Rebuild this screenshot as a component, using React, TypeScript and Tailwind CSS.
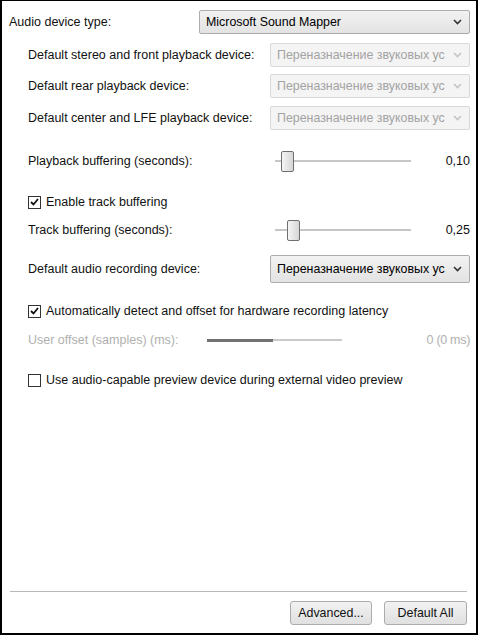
import React from 'react';

const Chevron = ({ disabled }: { disabled?: boolean }) => (
  <svg width="9" height="6" viewBox="0 0 9 6" className="shrink-0">
    <polyline
      points="1,1 4.5,4.5 8,1"
      fill="none"
      stroke={disabled ? '#c4c4c4' : '#333333'}
      strokeWidth="1.6"
    />
  </svg>
);

interface SelectProps {
  value: string;
  disabled?: boolean;
  className?: string;
}

const SelectBox = ({ value, disabled, className = '' }: SelectProps) => (
  <div
    className={`flex items-center justify-between pl-[6px] pr-[7px] rounded-[2px] border text-[12.4px] ${
      disabled
        ? 'border-[#d9d9d9] bg-[#f4f4f4] text-[#a3a3a3]'
        : 'border-[#acacac] bg-gradient-to-b from-[#f2f2f2] to-[#e3e3e3] text-black'
    } ${className}`}
  >
    <span className="whitespace-nowrap overflow-hidden">{value}</span>
    <Chevron disabled={disabled} />
  </div>
);

const Checkbox = ({ checked, label }: { checked?: boolean; label: string }) => (
  <div className="flex items-center gap-[5px]">
    <div className="w-[13px] h-[13px] border border-[#333] bg-white flex items-center justify-center">
      {checked && (
        <svg width="9" height="8" viewBox="0 0 9 8">
          <polyline points="1,4 3.5,6.5 8,1" fill="none" stroke="#111" strokeWidth="1.8" />
        </svg>
      )}
    </div>
    <span>{label}</span>
  </div>
);

const Slider = ({ thumbLeft }: { thumbLeft: number }) => (
  <div className="relative w-[136px] h-[22px]">
    <div className="absolute left-0 right-0 top-[10px] h-[2px] bg-[#c6c6c6]" />
    <div
      className="absolute top-[1px] w-[13px] h-[21px] rounded-[2px] border border-[#707070] bg-gradient-to-r from-[#f5f5f5] to-[#d6d6d6]"
      style={{ left: thumbLeft }}
    />
  </div>
);

const App = () => {
  const ru = 'Переназначение звуковых ус';

  return (
    <div
      className="w-[479px] h-[636px] bg-white text-[12.5px] text-[#111]"
      style={{ fontFamily: '"Liberation Sans", Arial, sans-serif' }}
    >
      <div className="w-[478px] h-[635px] border-l-2 border-t border-r-2 border-b-2 border-black flex flex-col">
        <div className="flex items-center justify-between mt-[9px] pl-[7px] pr-[6px] h-[24px]">
          <span>Audio device type:</span>
          <SelectBox value="Microsoft Sound Mapper" className="w-[271px] h-[24px]" />
        </div>

        <div className="pl-[26px] pr-[6px] flex flex-col">
          <div className="flex items-center justify-between mt-[9px] h-[24px]">
            <span>Default stereo and front playback device:</span>
            <SelectBox value={ru} disabled className="w-[200px] h-[24px]" />
          </div>
          <div className="flex items-center justify-between mt-[7px] h-[24px]">
            <span>Default rear playback device:</span>
            <SelectBox value={ru} disabled className="w-[200px] h-[24px]" />
          </div>
          <div className="flex items-center justify-between mt-[8px] h-[24px]">
            <span>Default center and LFE playback device:</span>
            <SelectBox value={ru} disabled className="w-[200px] h-[24px]" />
          </div>

          <div className="flex items-center mt-[20px] h-[22px]">
            <span className="w-[247px]">Playback buffering (seconds):</span>
            <Slider thumbLeft={6} />
            <span className="ml-auto">0,10</span>
          </div>

          <div className="mt-[21px] h-[18px] flex items-center">
            <Checkbox checked label="Enable track buffering" />
          </div>

          <div className="flex items-center mt-[8px] h-[22px]">
            <span className="w-[247px]">Track buffering (seconds):</span>
            <Slider thumbLeft={12} />
            <span className="ml-auto">0,25</span>
          </div>

          <div className="flex items-center justify-between mt-[14px] h-[28px]">
            <span>Default audio recording device:</span>
            <SelectBox value={ru} className="w-[200px] h-[28px]" />
          </div>

          <div className="mt-[19px] h-[18px] flex items-center">
            <Checkbox checked label="Automatically detect and offset for hardware recording latency" />
          </div>

          <div className="flex items-center mt-[10px] h-[20px] text-[#b0b0b0]">
            <span className="w-[179px]">User offset (samples) (ms):</span>
            <div className="flex items-center w-[135px]">
              <div className="w-[66px] h-[3px] bg-[#727272]" />
              <div className="flex-1 h-[2px] bg-[#cacaca]" />
            </div>
            <span className="ml-auto tracking-[-0.3px]">0 (0 ms)</span>
          </div>

          <div className="mt-[21px] h-[18px] flex items-center">
            <Checkbox label="Use audio-capable preview device during external video preview" />
          </div>
        </div>

        <div className="flex-1" />

        <div className="ml-[8px] mr-[9px] h-[2px] bg-[#b8b8b8] border-b border-white" />

        <div className="flex justify-end gap-[12px] mt-[8px] mb-[8px] pr-[9px]">
          <button className="w-[82px] h-[24px] rounded-[3px] border border-[#acacac] bg-gradient-to-b from-[#f2f2f2] to-[#e0e0e0] text-[12.4px]">
            Advanced...
          </button>
          <button className="w-[83px] h-[24px] rounded-[3px] border border-[#acacac] bg-gradient-to-b from-[#f2f2f2] to-[#e0e0e0] text-[12.4px]">
            Default All
          </button>
        </div>
      </div>
    </div>
  );
};

export default App;
